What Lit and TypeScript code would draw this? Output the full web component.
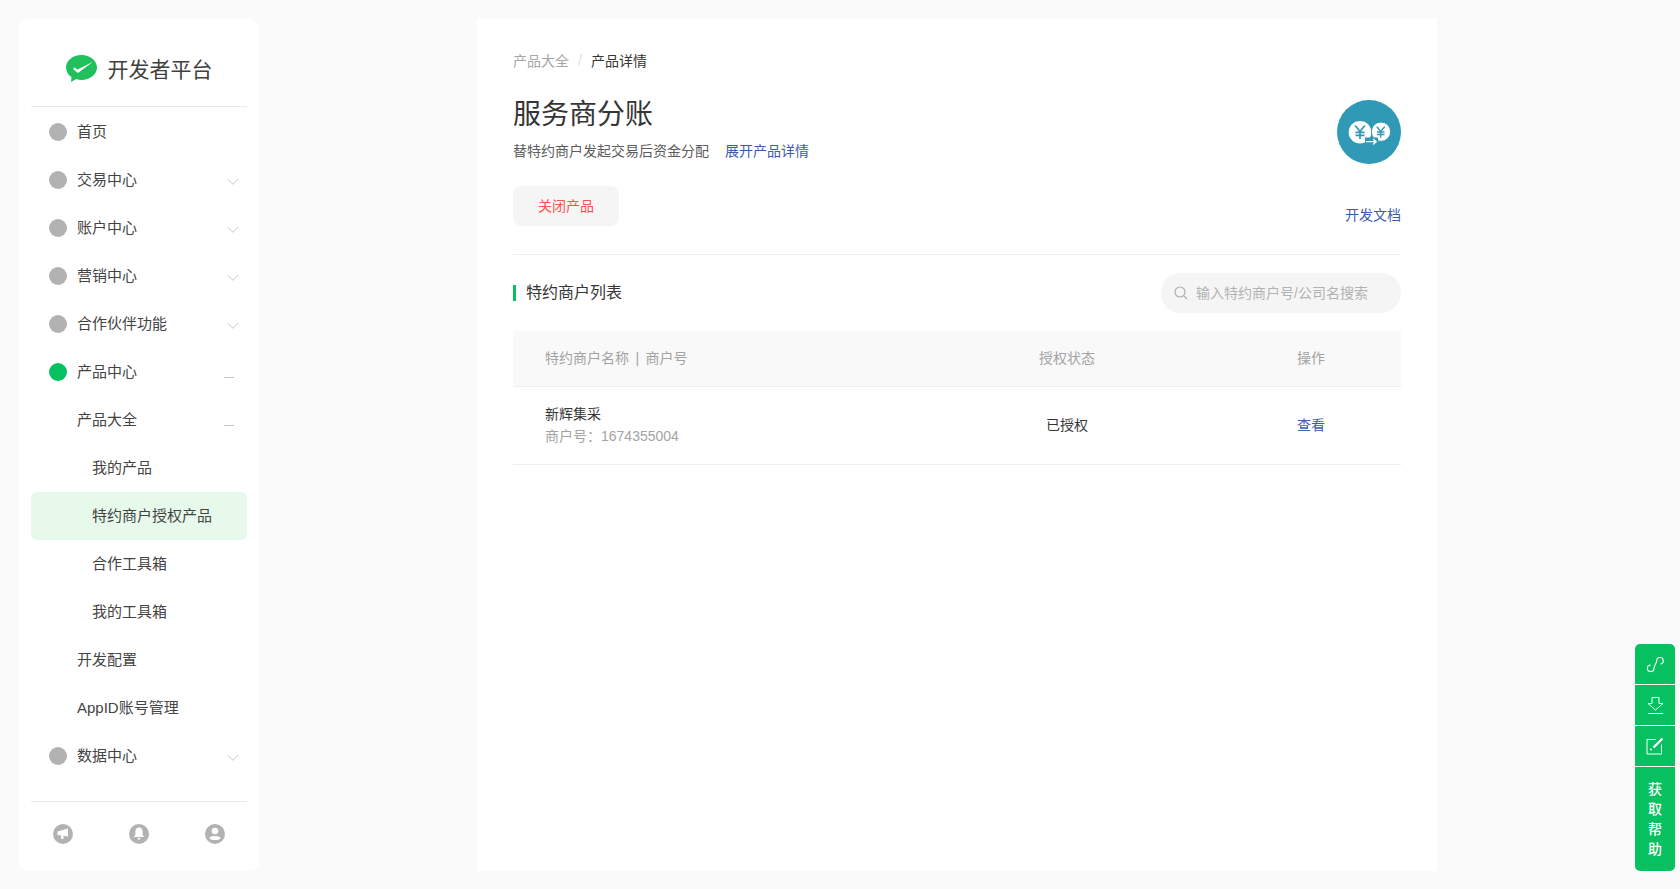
import { LitElement, html, css, svg } from "lit";
import { customElement } from "lit/decorators.js";

type Row = { label: string; level: 0 | 1 | 2; dot?: "grey" | "green"; arrow?: "down" | "dash"; active?: boolean };
const rows: Row[] = [
  { label: "首页", level: 0, dot: "grey" },
  { label: "交易中心", level: 0, dot: "grey", arrow: "down" },
  { label: "账户中心", level: 0, dot: "grey", arrow: "down" },
  { label: "营销中心", level: 0, dot: "grey", arrow: "down" },
  { label: "合作伙伴功能", level: 0, dot: "grey", arrow: "down" },
  { label: "产品中心", level: 0, dot: "green", arrow: "dash" },
  { label: "产品大全", level: 1, arrow: "dash" },
  { label: "我的产品", level: 2 },
  { label: "特约商户授权产品", level: 2, active: true },
  { label: "合作工具箱", level: 2 },
  { label: "我的工具箱", level: 2 },
  { label: "开发配置", level: 1 },
  { label: "AppID账号管理", level: 1 },
  { label: "数据中心", level: 0, dot: "grey", arrow: "down" },
];

const chevron = svg`<svg class="arrow" width="12" height="8" viewBox="0 0 12 8"><path d="M.8 1 6 6.300 11.200 1" fill="none" stroke="#c6c6c6" stroke-width="1"/></svg>`;
const dash = svg`<svg class="arrow dash" width="10" height="8" viewBox="0 0 10 8"><path d="M0 7.500H10" fill="none" stroke="#c6c6c6" stroke-width="1"/></svg>`;

@customElement("app-root")
export class AppRoot extends LitElement {
  static styles = css`
    :host { display: block; height: 889px; background: #fafafa; font-family: "Liberation Sans", "Noto Sans CJK SC", sans-serif; font-size: 14px; color: #353535; overflow: hidden; }
    .page { display: flex; align-items: flex-start; height: 889px; box-sizing: border-box; padding-top: 18px; }
    .side { width: 240px; height: 852px; margin: 1px 0 0 19px; background: #fff; border-radius: 10px; box-sizing: border-box; padding: 0 12px; flex: none; display: flex; flex-direction: column; }
    .logo { height: 88px; flex: none; box-sizing: border-box; border-bottom: 1px solid #e9e9e9; display: flex; align-items: center; justify-content: center; gap: 11px; font-size: 21px; color: #404040; padding-top: 12px; }
    .logo span { padding-bottom: 2px; }
    .nav { padding-top: 1px; flex: 1; }
    .row { height: 48px; display: flex; align-items: center; font-size: 15px; border-radius: 6px; color: #444; }
    .row.active { background: #e6f9ea; }
    .dot { width: 18px; height: 18px; border-radius: 50%; background: #b2b2b2; margin: 0 10px 0 18px; flex: none; }
    .dot.green { background: #07c160; }
    .l1 { padding-left: 46px; }
    .l2 { padding-left: 61px; }
    .row .label { flex: 1; padding-bottom: 3px; }
    .arrow { margin: 3px 8px 0 0; flex: none; }
    .arrow.dash { margin-right: 13px; }
    .tools { height: 70px; flex: none; box-sizing: border-box; border-top: 1px solid #e9e9e9; display: flex; align-items: flex-start; justify-content: space-between; padding: 22px 22px 0; }
    .tools svg { display: block; }
    .main { width: 960px; height: 853px; margin-left: 218px; background: #fff; flex: none; box-sizing: border-box; padding: 32px 36px 0; }
    .crumb { display: flex; align-items: center; height: 20px; color: #a6a6a6; font-size: 14px; }
    .crumb .sep { color: #e0e0e0; margin: 0 9px; }
    .crumb .cur { color: #353535; }
    .head { display: flex; justify-content: space-between; border-bottom: 1px solid #eeeeee; height: 185px; box-sizing: border-box; }
    .head-left { padding-top: 25px; }
    h1 { margin: 0; font-size: 28px; font-weight: 400; line-height: 40px; color: #353535; }
    .desc { margin-top: 6px; line-height: 20px; color: #5c5c5c; display: flex; gap: 16px; }
    a { color: #3d5cad; text-decoration: none; }
    .btn { margin-top: 25px; width: 106px; height: 40px; padding-bottom: 2px; box-sizing: border-box; border-radius: 8px; background: #f5f5f5; color: #fa5151; display: flex; align-items: center; justify-content: center; }
    .head-right { display: flex; flex-direction: column; align-items: flex-end; justify-content: space-between; padding-top: 30px; padding-bottom: 29px; }
    .coin { display: block; }
    .doc { line-height: 20px; }
    .sec { display: flex; align-items: center; justify-content: space-between; height: 76px; }
    .sec-title { border-left: 3px solid #07c160; padding-left: 10px; font-size: 16px; line-height: 16px; color: #353535; }
    .search { width: 240px; height: 40px; border-radius: 20px; background: #f5f5f5; display: flex; align-items: center; padding-left: 13px; box-sizing: border-box; gap: 8px; color: #b2b2b2; }
    .search span { padding-bottom: 2px; }
    .t { display: grid; grid-template-columns: 1fr 172px 248px; }
    .t > div { display: flex; align-items: center; }
    .th { height: 56px; padding-bottom: 4px; background: #f9f9f9; border-bottom: 1px solid #eeeeee; color: #a3a3a3; box-sizing: border-box; }
    .td { height: 78px; padding-bottom: 4px; border-bottom: 1px solid #eeeeee; box-sizing: border-box; color: #353535; }
    .td.c1 { padding-bottom: 2px; }
    .c1 { padding-left: 32px; }
    .c2 { justify-content: center; }
    .c3 { padding-left: 144px; }
    .bar { margin: 0 2.500px; }
    .name { display: block; line-height: 22px; }
    .sub { display: block; line-height: 22px; color: #a3a3a3; }
    .help { position: fixed; left: 1635px; top: 644px; width: 40px; height: 227px; border-radius: 5px; overflow: hidden; display: flex; flex-direction: column; gap: 1px; background: #fff; }
    .help > div { background: #07c160; display: flex; align-items: center; justify-content: center; flex: none; height: 40px; }
    .help > .txt { flex: 1; color: #fff; font-size: 14px; line-height: 20px; text-align: center; flex-direction: column; font-weight: 500; }
  `;

  render() {
    return html`<div class="page">
      <aside class="side">
        <div class="logo">
          <svg width="31" height="27" viewBox="0 0 31 27"><path d="M15.500 0C6.900 0 0 5.500 0 12.500c0 3.900 2.100 7.300 5.500 9.600L5 27l5.200-2.900c1.700.6 3.400.9 5.300.9C24.100 25 31 19.400 31 12.500S24.100 0 15.500 0z" fill="#20c05c"/><path d="M8 12.300l3.600 2.300L27 6.800 12 18l-4.600-3.600z" fill="#fff"/></svg>
          <span>开发者平台</span>
        </div>
        <div class="nav">
          ${rows.map((r) => html`<div class="row ${r.level === 1 ? "l1" : r.level === 2 ? "l2" : ""} ${r.active ? "active" : ""}">
            ${r.dot ? html`<span class="dot ${r.dot === "green" ? "green" : ""}"></span>` : ""}
            <span class="label">${r.label}</span>
            ${r.arrow === "down" ? chevron : r.arrow === "dash" ? dash : ""}
          </div>`)}
        </div>
        <div class="tools">
          <svg width="20" height="20" viewBox="0 0 20 20"><circle cx="10" cy="10" r="10" fill="#b2b2b2"/><path d="M4.500 7.500 15 4.500v8L4.500 11z" fill="#fff"/><rect x="8" y="11.500" width="2.500" height="3.500" fill="#fff"/></svg>
          <svg width="20" height="20" viewBox="0 0 20 20"><circle cx="10" cy="10" r="10" fill="#b2b2b2"/><path d="M10 3.500c2.500 0 3.600 1.800 3.600 4v3.500l1.700 2H4.700l1.700-2V7.500c0-2.200 1.100-4 3.600-4z" fill="#fff"/><rect x="8.500" y="14" width="3" height="1.500" rx=".7" fill="#fff"/></svg>
          <svg width="20" height="20" viewBox="0 0 20 20"><circle cx="10" cy="10" r="10" fill="#b2b2b2"/><circle cx="10" cy="7" r="3.300" fill="#fff"/><ellipse cx="10" cy="14" rx="5.500" ry="2" fill="#fff"/></svg>
        </div>
      </aside>
      <main class="main">
        <div class="crumb"><span>产品大全</span><span class="sep">/</span><span class="cur">产品详情</span></div>
        <div class="head">
          <div class="head-left">
            <h1>服务商分账</h1>
            <div class="desc"><span>替特约商户发起交易后资金分配</span><a>展开产品详情</a></div>
            <div class="btn">关闭产品</div>
          </div>
          <div class="head-right">
            <svg class="coin" width="64" height="64" viewBox="0 0 64 64">
              <circle cx="32" cy="32" r="32" fill="#2f99b6"/>
              <circle cx="23" cy="32.300" r="11.300" fill="#fff"/>
              <circle cx="44" cy="31.700" r="9.700" fill="#fff" stroke="#2f99b6" stroke-width="1"/>
              <path d="M18.200 25.500l4.800 6 4.800-6M23 31.500V39M18.500 32.300h9M18.500 35.300h9" fill="none" stroke="#2f99b6" stroke-width="1.700"/>
              <path d="M39.800 26.800l3.900 4.600 4-4.600M43.700 31.400v6M40 32h7.500M40 34.500h7.500" fill="none" stroke="#2f99b6" stroke-width="1.400"/>
              <rect x="28" y="37.500" width="13" height="8" fill="#2f99b6"/>
              <path d="M29 41.700h10M36 39 39.200 41.700 36 44.400" fill="none" stroke="#fff" stroke-width="1.300"/>
            </svg>
            <a class="doc">开发文档</a>
          </div>
        </div>
        <div class="sec">
          <div class="sec-title">特约商户列表</div>
          <div class="search">
            <svg width="14" height="14" viewBox="0 0 14 14"><circle cx="6" cy="6" r="5" fill="none" stroke="#a8a8a8" stroke-width="1.100"/><path d="M9.600 9.600 13 13" stroke="#a8a8a8" stroke-width="1.100"/></svg>
            <span>输入特约商户号/公司名搜索</span>
          </div>
        </div>
        <div class="t">
          <div class="th c1"><span>特约商户名称 <span class="bar">|</span> 商户号</span></div><div class="th c2">授权状态</div><div class="th c3">操作</div>
          <div class="td c1"><span><span class="name">新辉集采</span><span class="sub">商户号：1674355004</span></span></div>
          <div class="td c2">已授权</div>
          <div class="td c3"><a>查看</a></div>
        </div>
      </main>
      <div class="help">
        <div><svg width="18" height="18" viewBox="0 0 18 18"><path d="M14.500 9A3.300 3.300 0 1 0 10.700 5.700C10.700 8.500 8 10.500 8 13.300A3.300 3.300 0 1 1 4.700 10" fill="none" stroke="#fff" stroke-width="1.100"/></svg></div>
        <div><svg width="17" height="17" viewBox="0 0 17 17"><path d="M5 .5h7v6h4L8.500 13 1 6.500h4zM1 16.500h15" fill="none" stroke="#fff" stroke-width="1"/></svg></div>
        <div><svg width="18" height="18" viewBox="0 0 18 18"><path d="M10 2.500H1v14.500h14.500V7.500" fill="none" stroke="#fff" stroke-width="1"/><path d="M7.500 10.500 16.500 1.500M4.500 13l1-1" stroke="#fff" stroke-width="2.400"/></svg></div>
        <div class="txt"><span>获</span><span>取</span><span>帮</span><span>助</span></div>
      </div>
    </div>`;
  }
}
